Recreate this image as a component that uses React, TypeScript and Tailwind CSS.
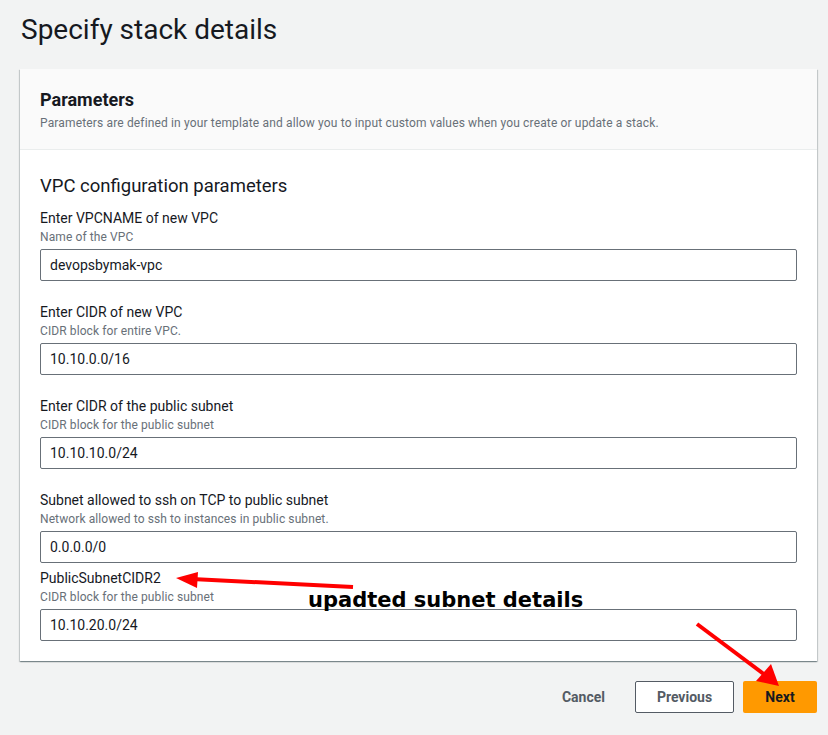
import React from "react";

const fields = [
  { label: "Enter VPCNAME of new VPC", desc: "Name of the VPC", value: "devopsbymak-vpc" },
  { label: "Enter CIDR of new VPC", desc: "CIDR block for entire VPC.", value: "10.10.0.0/16" },
  { label: "Enter CIDR of the public subnet", desc: "CIDR block for the public subnet", value: "10.10.10.0/24" },
  { label: "Subnet allowed to ssh on TCP to public subnet", desc: "Network allowed to ssh to instances in public subnet.", value: "0.0.0.0/0" },
];

function Field({ label, desc, value, last }: { label: string; desc: string; value: string; last?: boolean }) {
  return (
    <div className={last ? "" : "pb-[20px]"}>
      <div className="text-[14px] leading-[22px] text-[#16191f]">{label}</div>
      <div className="text-[12px] leading-[16px] tracking-[0.1px] text-[#687078]">{desc}</div>
      <div className="mt-[4px] h-[32px] border border-[#687078] rounded-[2px] bg-white px-[9px] flex items-center text-[14px] text-[#16191f]">
        {value}
      </div>
    </div>
  );
}

export default function App() {
  return (
    <div
      className="relative min-h-[735px] w-[828px] bg-[#f2f3f3] pl-[20px] pr-[11px] overflow-hidden"
      style={{ fontFamily: "Roboto, 'Liberation Sans', sans-serif" }}
    >
      <div className="h-[69px] pt-[13px]">
        <h1 className="text-[28px] leading-[34px] text-[#16191f] font-normal pl-[1px]">Specify stack details</h1>
      </div>

      <div className="bg-white shadow-[0_1px_1px_0_rgba(0,28,36,0.3),1px_1px_1px_0_rgba(0,28,36,0.15),-1px_1px_1px_0_rgba(0,28,36,0.15)]">
        <div className="h-[81px] bg-[#fafafa] border-b border-[#eaeded] px-[20px] pt-[19px]">
          <div className="text-[18px] leading-[24px] font-bold text-[#16191f]">Parameters</div>
          <div className="mt-[3px] text-[12px] leading-[16px] tracking-[0.15px] text-[#687078]">
            Parameters are defined in your template and allow you to input custom values when you create or update a stack.
          </div>
        </div>
        <div className="px-[20px] pt-[22px] pb-[20px]">
          <div className="text-[18.5px] leading-[28px] text-[#16191f] mb-[7px]">VPC configuration parameters</div>
          {fields.map((f, i) => (
            <Field key={i} {...f} last={i === fields.length - 1} />
          ))}
          <div className="mt-[4px]">
            <Field label="PublicSubnetCIDR2" desc="CIDR block for the public subnet" value="10.10.20.0/24" last />
          </div>
        </div>
      </div>

      <div className="mt-[20px] flex justify-end items-center gap-[9px]">
        <button className="h-[32px] px-0 mr-[21px] text-[14px] font-bold text-[#545b64]">Cancel</button>
        <button className="h-[32px] w-[99px] border border-[#545b64] rounded-[2px] bg-white text-[14px] font-bold text-[#545b64]">
          Previous
        </button>
        <button className="h-[32px] w-[74px] rounded-[2px] bg-[#ff9900] text-[14px] font-bold text-[#16191f]">Next</button>
      </div>

      {/* Annotations */}
      <svg className="absolute left-0 top-0 pointer-events-none" width="828" height="735">
        <line x1="353" y1="587" x2="192" y2="579" stroke="#ff0000" strokeWidth="4" />
        <polygon points="176,578 198,572 197,588" fill="#ff0000" />
        <line x1="697" y1="624" x2="765" y2="675" stroke="#ff0000" strokeWidth="4" />
        <polygon points="779,686 756,681 771,664" fill="#ff0000" />
      </svg>
      <div
        className="absolute left-[308px] top-[587px] text-[21px] leading-[26px] font-bold text-black"
        style={{ fontFamily: "'DejaVu Sans', sans-serif" }}
      >
        upadted subnet details
      </div>
    </div>
  );
}
